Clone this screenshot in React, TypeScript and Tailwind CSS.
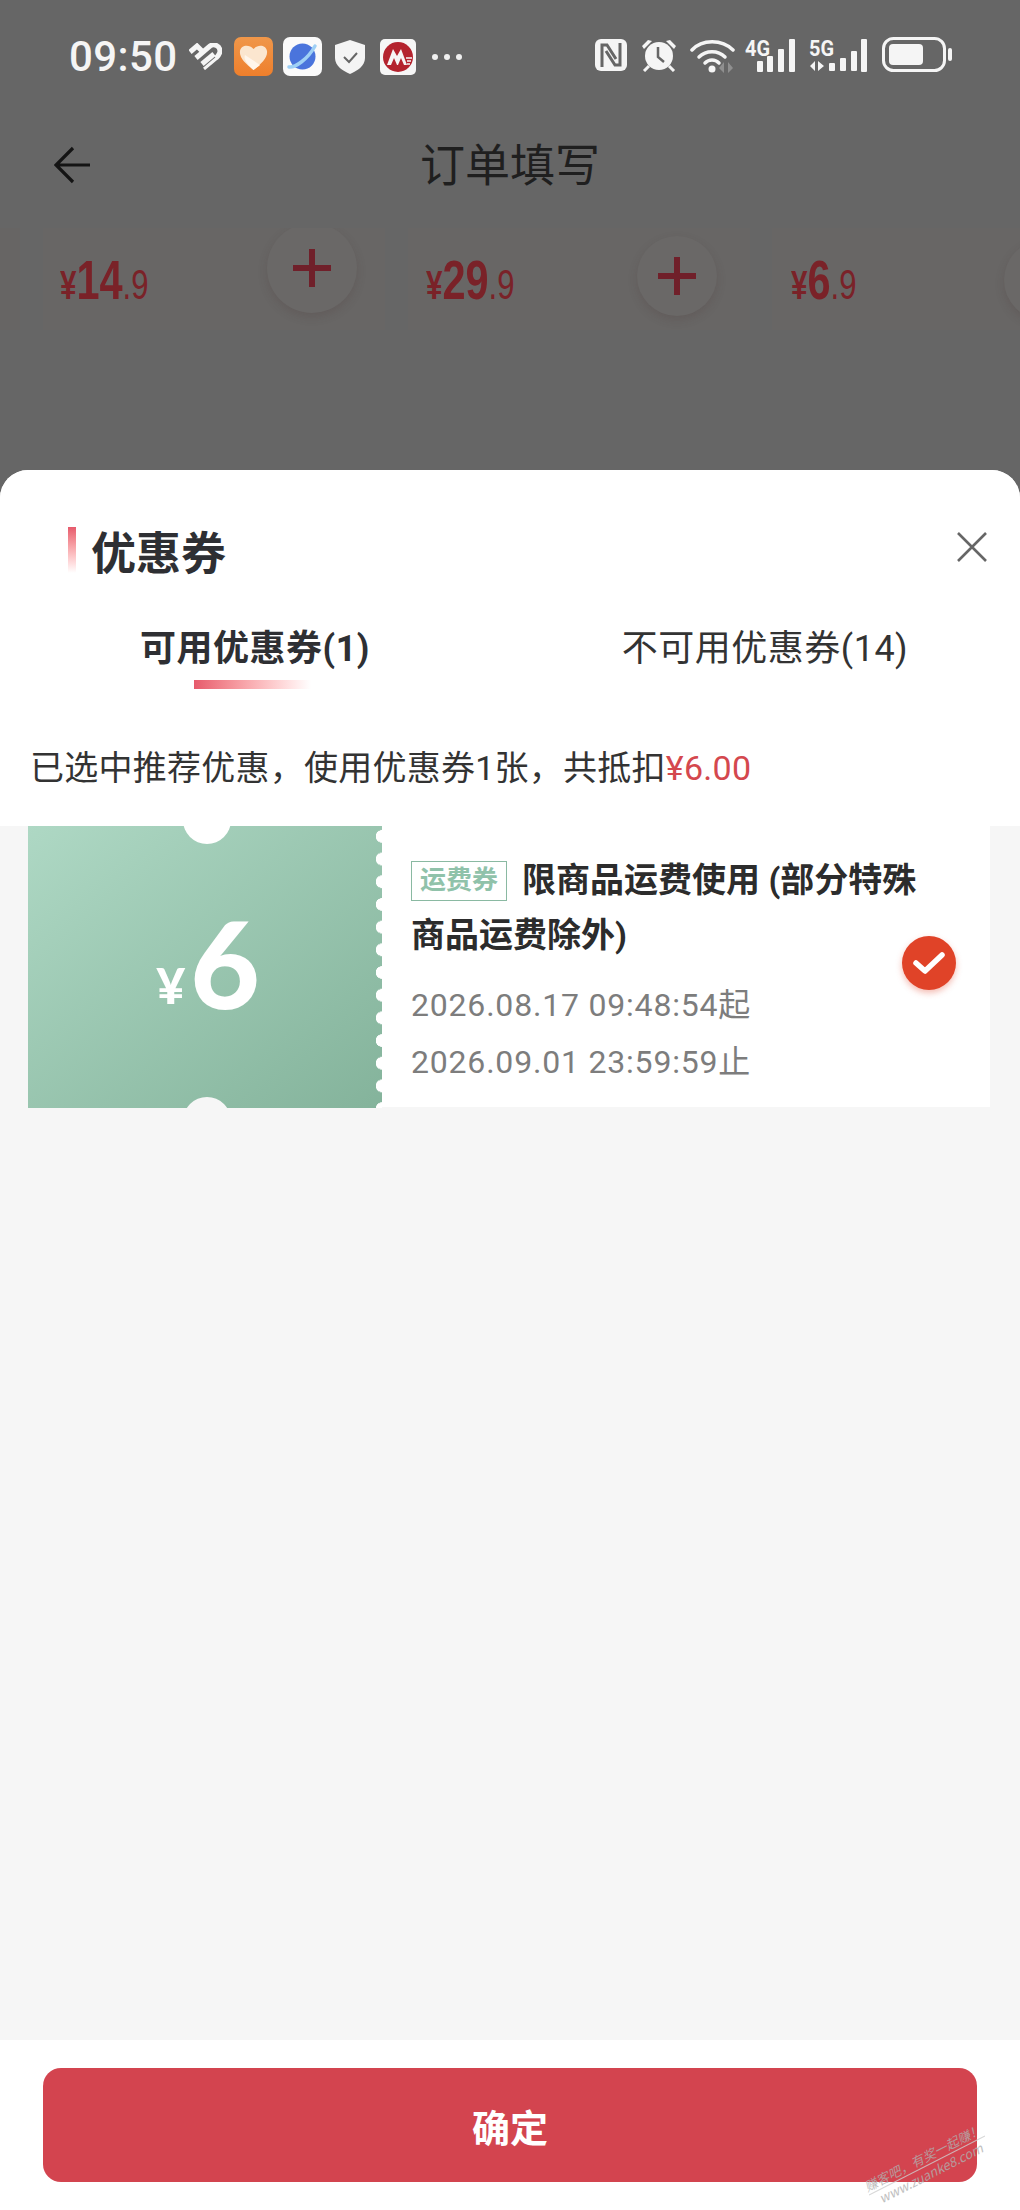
const sans = "font-['Roboto','Noto_Sans_CJK_SC',sans-serif]"

function SwirlHeart() {
  return (
    <svg width="33" height="27" viewBox="0 0 33 27" className="shrink-0" fill="none" stroke="#f5f5f5" strokeWidth="5">
      <path d="M1 9 L8 3 L13 8" />
      <path d="M7 15 L21 3 C25 0 31 3 31 8 C31 11 29 13 27 15" />
      <path d="M13 21 L25 11" />
      <path d="M15 26 L28 15" strokeWidth="3" />
    </svg>
  )
}

function HeartApp() {
  return (
    <svg width="39" height="39" viewBox="0 0 39 39" className="shrink-0">
      <defs>
        <linearGradient id="orange" x1="0" y1="0" x2="0" y2="1">
          <stop offset="0" stopColor="#f0974a" />
          <stop offset="1" stopColor="#ee7f2c" />
        </linearGradient>
      </defs>
      <rect width="39" height="39" rx="7" fill="url(#orange)" />
      <path d="M19.5 33 C12 27 5 21 6 14 C7 8 15 7 19.5 12 C24 7 32 8 33 14 C34 21 27 27 19.5 33 Z" fill="#fbe6cf" />
      <path d="M19.5 33 C14 28 9 22 11 18 L26 28 C24 30 22 31 19.5 33 Z" fill="#fff6ec" />
    </svg>
  )
}

function PlanetApp() {
  return (
    <svg width="39" height="39" viewBox="0 0 39 39" className="shrink-0">
      <rect width="39" height="39" rx="7" fill="#fafafa" />
      <circle cx="19.5" cy="19.5" r="13" fill="#4a74dc" />
      <path d="M6 30 C12 31 25 22 32 9" stroke="#9fd0f5" strokeWidth="3.5" fill="none" strokeLinecap="round" />
    </svg>
  )
}

function ShieldIcon() {
  return (
    <svg width="30" height="34" viewBox="0 0 30 34" className="shrink-0">
      <path d="M15 0 L30 5 V18 C30 26 22 31 15 34 C8 31 0 26 0 18 V5 Z" fill="#f4f4f4" />
      <path d="M9 17 L14 22 L22 13" stroke="#666" strokeWidth="2" fill="none" />
    </svg>
  )
}

function BankIcon() {
  return (
    <svg width="36" height="36" viewBox="0 0 36 36" className="shrink-0">
      <rect width="36" height="36" rx="5" fill="#f6f6f6" />
      <circle cx="18" cy="18" r="15" fill="#b4232e" />
      <path d="M7 26 L13 10 L17 17 L21 10 L27 26 Z" fill="#f6f6f6" />
      <path d="M11 26 L14 19 L17 26 Z M18 26 L21 19 L24 26 Z" fill="#b4232e" />
      <path d="M26 19 H32 M27 22 H31 M27 25 H30" stroke="#f6f6f6" strokeWidth="1.3" />
    </svg>
  )
}

function NfcIcon() {
  return (
    <svg width="32" height="32" viewBox="0 0 32 32" className="shrink-0">
      <rect width="32" height="32" rx="6" fill="#f5f5f5" />
      <path d="M7 28 V6 H12 L21 20 M25 4 V26 H20 L11 12" stroke="#666" strokeWidth="3" fill="none" />
    </svg>
  )
}

function AlarmIcon() {
  return (
    <svg width="36" height="34" viewBox="0 0 36 34" className="shrink-0">
      <circle cx="18" cy="18" r="14" fill="#f5f5f5" />
      <path d="M1 8 L7 2 L11 3 L3 11 Z M35 8 L29 2 L25 3 L33 11 Z" fill="#f5f5f5" />
      <path d="M8 28 L3 33 M28 28 L33 33" stroke="#f5f5f5" strokeWidth="3" />
      <path d="M17 9 V19 L23 24" stroke="#666" strokeWidth="2.5" fill="none" />
    </svg>
  )
}

function WifiIcon() {
  return (
    <svg width="45" height="35" viewBox="0 0 45 35" className="shrink-0" fill="none" stroke="#f5f5f5" strokeLinecap="round">
      <path d="M2 12 C12 1 32 1 43 12" strokeWidth="3.5" />
      <path d="M9 19 C16 12 28 12 35 19" strokeWidth="3.5" />
      <path d="M15 25 C19 21 25 21 29 25" strokeWidth="3.5" />
      <circle cx="22" cy="31" r="3.5" fill="#f5f5f5" stroke="none" />
      <path d="M34 24 V35 L29 30 Z M38 24 V35 L43 30 Z" fill="#8f8f8f" stroke="none" />
    </svg>
  )
}

function SignalIcon({ label, wide }: { label: string; wide?: boolean }) {
  const bars = wide
    ? [[20, 24, 8], [31, 19, 13], [42, 12, 20], [52, 0, 33]]
    : [[12, 22, 11], [22, 17, 16], [33, 10, 23], [44, 0, 33]]
  return (
    <svg width={wide ? 59 : 53} height="36" viewBox={`0 0 ${wide ? 59 : 53} 36`} className="shrink-0">
      <text x="0" y="19" fontSize="22" fontWeight="700" fill="#f5f5f5" fontFamily="Roboto, sans-serif" textLength="25" lengthAdjust="spacingAndGlyphs">{label}</text>
      {bars.map(([x, y, h]) => (
        <rect key={x} x={x} y={y + 2} width="6" height={h} rx="1" fill="#f5f5f5" />
      ))}
      {wide ? <path d="M6 24 V34 L1 29 Z M9 24 V34 L15 29 Z" fill="#f5f5f5" /> : null}
    </svg>
  )
}

function BatteryIcon() {
  return (
    <svg width="70" height="36" viewBox="0 0 70 36" className="shrink-0">
      <rect x="1.5" y="1.5" width="61" height="32" rx="10" fill="none" stroke="#f5f5f5" strokeWidth="3" />
      <rect x="7" y="7" width="34" height="21" rx="4" fill="#f5f5f5" />
      <rect x="66" y="11" width="4" height="13" rx="2" fill="#f5f5f5" />
    </svg>
  )
}

function Price({ whole, cents }: { whole: string; cents: string }) {
  return (
    <p className="flex origin-left scale-x-[0.74] items-baseline font-['Liberation_Sans',sans-serif] text-[#7a2228]">
      <span className="text-[40px] font-bold">¥</span>
      <span className="text-[56px] leading-none font-bold">{whole}</span>
      <span className="text-[42px] leading-none">.{cents}</span>
    </p>
  )
}

function PlusButton({ className }: { className: string }) {
  return (
    <div className={`absolute flex items-center justify-center rounded-full bg-[#6a6867] shadow-[0_4px_10px_rgba(70,50,50,0.18)] ${className}`}>
      <svg width="40" height="40" viewBox="0 0 40 40" stroke="#70202a" strokeWidth="6">
        <path d="M1 20 H39 M20 1 V39" />
      </svg>
    </div>
  )
}

function Backdrop() {
  return (
    <div className="h-[470px] shrink-0">
      <div className={`flex h-[115px] items-start justify-between pt-[37px] pr-[68px] pl-[69px] ${sans}`}>
        <div className="flex items-center">
          <span className="w-[105px] text-[42px] leading-[39px] font-medium tracking-[0.4px] text-[#f5f5f5]">09:50</span>
          <div className="ml-[15px]"><SwirlHeart /></div>
          <div className="ml-[12px]"><HeartApp /></div>
          <div className="ml-[10px]"><PlanetApp /></div>
          <div className="ml-[13px]"><ShieldIcon /></div>
          <div className="ml-[15px]"><BankIcon /></div>
          <div className="ml-[16px] flex gap-[6px]">
            <span className="size-[6px] rounded-full bg-[#f0f0f0]" />
            <span className="size-[6px] rounded-full bg-[#f0f0f0]" />
            <span className="size-[6px] rounded-full bg-[#f0f0f0]" />
          </div>
        </div>
        <div className="flex items-center">
          <NfcIcon />
          <div className="ml-[14px]"><AlarmIcon /></div>
          <div className="ml-[13px]"><WifiIcon /></div>
          <div className="ml-[10px]"><SignalIcon label="4G" /></div>
          <div className="ml-[11px]"><SignalIcon label="5G" wide /></div>
          <div className="ml-[14px]"><BatteryIcon /></div>
        </div>
      </div>

      <div className="relative flex h-[113px] items-center justify-center">
        <svg width="38" height="38" viewBox="0 0 38 38" fill="none" stroke="#141414" strokeWidth="3.2" className="absolute top-[31px] left-[54px]">
          <path d="M36 19 H2 M19 2 L2 19 L19 36" />
        </svg>
        <h1 className="-mt-[17px] font-['Noto_Sans_CJK_SC',sans-serif] text-[45px] leading-[60px] text-[#1f1f1f]">订单填写</h1>
      </div>

      <div className="flex h-[102px] gap-[23px] overflow-hidden">
        <div className="w-[20px] shrink-0 bg-[#676564]" />
        <div className="relative w-[342px] shrink-0 bg-[#686665] pt-[24px] pl-[17px]">
          <Price whole="14" cents="9" />
          <PlusButton className="top-[-5px] left-[224px] size-[90px]" />
        </div>
        <div className="relative w-[342px] shrink-0 bg-[#686665] pt-[24px] pl-[18px]">
          <Price whole="29" cents="9" />
          <PlusButton className="top-[8px] left-[229px] size-[80px]" />
        </div>
        <div className="relative -ml-px w-[248px] shrink-0 bg-[#686665] pt-[24px] pl-[19px]">
          <Price whole="6" cents="9" />
          <PlusButton className="top-[12px] left-[232px] size-[80px]" />
        </div>
      </div>
    </div>
  )
}

function Coupon() {
  return (
    <div className="flex h-[281px] bg-white">
      <div className="relative h-[282px] w-[354px] shrink-0 overflow-hidden bg-linear-to-br from-[#aed8c4] to-[#84b39b]">
        <span className="absolute -top-[30px] left-[155px] size-[48px] rounded-full bg-white" />
        <span className="absolute -bottom-[37px] left-[155px] size-[48px] rounded-full bg-[#f6f6f6]" />
        <span className="absolute top-[-1px] right-0 h-[283px] w-[7px] bg-[radial-gradient(circle_at_right,#fff_6px,transparent_6.5px)] bg-size-[7px_22.7px]" />
        <div className="flex h-full items-center justify-center pb-[8px] pl-[3px] font-['Lato',sans-serif] font-black text-white">
          <span className="mt-[44px] mr-[5px] ml-[3px] text-[50px] leading-none">¥</span>
          <span className="text-[120px] leading-none">6</span>
        </div>
      </div>
      <div className="flex min-w-0 flex-1 items-start pt-[27px] pr-[34px] pl-[29px]">
        <div className="w-0 flex-1 whitespace-nowrap">
          <p className={`text-[34px] leading-[55px] font-bold text-[#2c2c2c] ${sans}`}>
            <span className="mr-[15px] inline-block h-[40px] w-[96px] border border-[#8ab9a2] text-center align-[3px] text-[26px] leading-[37px] text-[#90c2aa]">运费券</span>
            限商品运费使用 (部分特殊
            <br />
            商品运费除外)
          </p>
          <p className={`mt-[14px] text-[32px] leading-[57px] tracking-[0.8px] text-[#7d7d7d] ${sans}`}>
            2026.08.17 09:48:54起
            <br />
            2026.09.01 23:59:59止
          </p>
        </div>
        <div className="mt-[83px] flex size-[54px] shrink-0 items-center justify-center rounded-full bg-[#e04328] shadow-[0_3px_6px_rgba(224,67,40,0.35)]">
          <svg width="34" height="26" viewBox="0 0 34 26" fill="none" stroke="#fff" strokeWidth="5.5" strokeLinecap="round" strokeLinejoin="round">
            <path d="M4 13 L13 21 L30 5" />
          </svg>
        </div>
      </div>
    </div>
  )
}

function Watermark() {
  return (
    <div className="absolute right-[28px] bottom-[28px] -rotate-[27deg] whitespace-nowrap text-center font-['Noto_Sans_CJK_SC',sans-serif] text-[13px] leading-[16px] text-[#b0b0b0] italic opacity-80">
      <p className="border-b border-[#cfcfcf]">赚客吧，有奖一起赚！</p>
      <p>www.zuanke8.com</p>
    </div>
  )
}

export default function App() {
  return (
    <div className="flex h-[2210px] w-[1020px] flex-col overflow-hidden bg-[#666]">
      <Backdrop />
      <section className="flex min-h-0 flex-1 flex-col overflow-hidden rounded-t-[28px] bg-[#f6f6f6] font-['Noto_Sans_CJK_SC',sans-serif]">
        <div className="h-[356px] shrink-0 bg-white">
          <div className="flex items-start justify-between pt-[57px] pr-[33px] pl-[68px]">
            <div className="flex">
              <span className="h-[46px] w-[8px] bg-linear-to-b from-[#e65a6c] to-white" />
              <h2 className="ml-[15px] text-[45px] leading-[48px] font-bold text-[#2e2f33]">优惠券</h2>
            </div>
            <svg width="30" height="30" viewBox="0 0 30 30" stroke="#666" strokeWidth="2.6" className="mt-[5px]">
              <path d="M1 1 L29 29 M29 1 L1 29" />
            </svg>
          </div>
          <div className={`mt-[49px] grid grid-cols-2 text-center text-[36px] leading-[50px] tracking-[0.5px] ${sans}`}>
            <div className="flex flex-col items-center">
              <span className="font-bold text-[#2e2f33]">可用优惠券(1)</span>
              <span className="mt-[6px] ml-[-6px] h-[9px] w-[117px] bg-linear-to-r from-[#e65a6c] to-white" />
            </div>
            <span className="text-[#333]">不可用优惠券(14)</span>
          </div>
          <p className={`mt-[54px] pl-[30px] text-[34px] leading-[50px] tracking-[0.25px] text-[#333] ${sans}`}>
            已选中推荐优惠，使用优惠券1张，共抵扣<span className="text-[#d4484e]">¥6.00</span>
          </p>
        </div>
        <div className="min-h-0 flex-1 pr-[30px] pl-[28px]">
          <Coupon />
        </div>
        <div className="relative h-[170px] shrink-0 bg-white px-[43px] pt-[28px]">
          <button type="button" className="h-[114px] w-full rounded-[18px] bg-[#d3444f] text-[38px] font-bold text-white">
            确定
          </button>
          <Watermark />
        </div>
      </section>
    </div>
  )
}
